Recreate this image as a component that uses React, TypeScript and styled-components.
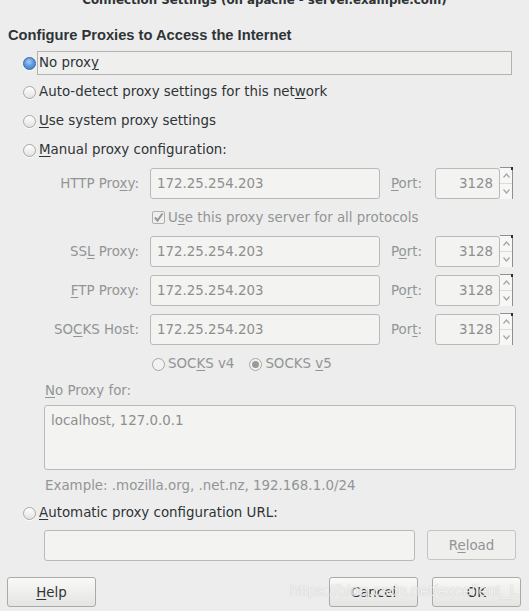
import React from 'react';
import styled, { createGlobalStyle } from 'styled-components';

const GlobalStyle = createGlobalStyle`
    html, body {
        margin: 0;
        padding: 0;
        background: #ededed;
    }
    body {
        font-family: "DejaVu Sans", "Noto Sans", sans-serif;
        font-size: 13.4px;
        color: #2e3436;
    }
`;

const Window = styled.div`
    position: relative;
    width: 529px;
    height: 611px;
    overflow: hidden;
    background: #ededed;
    display: flex;
    flex-direction: column;
`;

const TitleBar = styled.div`
    height: 12px;
    overflow: hidden;
    display: flex;
    justify-content: center;
    align-items: flex-end;
    font-size: 11.8px;
    font-weight: 700;
    line-height: 15px;
    color: #2e3436;
    span {
        display: block;
        margin-bottom: 4px;
    }
`;

const Content = styled.div`
    display: flex;
    flex-direction: column;
    padding: 0 17px 0 8px;
`;

const Heading = styled.div`
    font-family: "Liberation Sans", Arial, sans-serif;
    font-weight: 700;
    font-size: 14.7px;
    line-height: 16px;
    margin-top: 15px;
    margin-bottom: 8px;
`;

const Options = styled.div<{ gapTop?: number }>`
    display: flex;
    flex-direction: column;
    gap: 5px;
    padding-left: 15px;
    margin-top: ${p => p.gapTop || 0}px;
`;

const RadioRow = styled.label<{ disabled?: boolean }>`
    display: flex;
    align-items: center;
    height: 24px;
    gap: 1px;
    color: ${p => (p.disabled ? '#929595' : '#2e3436')};
`;

const RadioDot = styled.span<{ checked?: boolean; disabled?: boolean }>`
    position: relative;
    flex: none;
    width: 13px;
    height: 13px;
    box-sizing: border-box;
    border-radius: 50%;
    border: 1px solid ${p => (p.checked && !p.disabled ? '#3465a4' : '#a7a7a5')};
    background: ${p =>
        p.checked && !p.disabled
            ? 'radial-gradient(circle at 45% 35%, #a9cdf5 0%, #5f9be0 45%, #3b78c8 100%)'
            : p.disabled
            ? '#f2f2f1'
            : 'linear-gradient(#ffffff, #e2e2e0)'};
    box-shadow: ${p => (p.disabled ? 'none' : '0 1px 0 rgba(255,255,255,0.8)')};
    &::after {
        content: '';
        display: ${p => (p.checked && p.disabled ? 'block' : 'none')};
        position: absolute;
        left: 2px;
        top: 2px;
        width: 7px;
        height: 7px;
        border-radius: 50%;
        background: #9a9a99;
    }
`;

const OptionText = styled.span<{ focused?: boolean }>`
    display: block;
    height: 24px;
    line-height: 22px;
    box-sizing: border-box;
    padding: 0 1px;
    white-space: nowrap;
    flex: ${p => (p.focused ? 1 : 'none')};
    border: 1px solid ${p => (p.focused ? '#b2b2b0' : 'transparent')};
    background: ${p => (p.focused ? '#efefee' : 'transparent')};
`;

const U = styled.u`
    text-decoration: underline;
    text-underline-offset: 2px;
`;

const Manual = styled.div`
    display: flex;
    flex-direction: column;
    gap: 8px;
    padding-left: 36px;
    margin-top: 6px;
`;

const ProxyRow = styled.div`
    display: flex;
    align-items: center;
    height: 31px;
`;

const FieldLabel = styled.span<{ width: number }>`
    width: ${p => p.width}px;
    flex: none;
    color: #929595;
    white-space: nowrap;
`;

const RightLabel = styled(FieldLabel)`
    text-align: right;
    margin-right: 11px;
`;

const PortLabel = styled(FieldLabel)`
    margin-left: 11px;
`;

const TextBox = styled.div<{ width: number; align?: string }>`
    width: ${p => p.width}px;
    height: 31px;
    flex: none;
    box-sizing: border-box;
    display: flex;
    align-items: center;
    justify-content: ${p => (p.align === 'right' ? 'flex-end' : 'flex-start')};
    padding: 0 6px;
    border: 1px solid #b9b9b6;
    border-radius: 3px;
    background: #f3f3f2;
    color: #8e8e8e;
    white-space: nowrap;
`;

const Spinner = styled.div`
    position: relative;
    width: 13px;
    height: 32px;
    margin-top: -1px;
    flex: none;
    box-sizing: border-box;
    display: flex;
    flex-direction: column;
    background: #f7f7f6;
    border-top: 1px solid #8f8f8f;
    border-right: 1px solid #8f8f8f;
    &::before {
        content: '';
        position: absolute;
        right: -1px;
        top: -1px;
        width: 2px;
        height: 3px;
        background: #2e2e2e;
    }
`;

const SpinHalf = styled.div<{ top?: boolean }>`
    flex: 1;
    display: flex;
    align-items: center;
    justify-content: center;
    border-bottom: ${p => (p.top ? '1px solid #dcdcdb' : 'none')};
`;

const CheckRow = styled.label`
    display: flex;
    align-items: center;
    gap: 3px;
    height: 21px;
    padding-left: 108px;
    color: #929595;
`;

const CheckBox = styled.span`
    width: 13px;
    height: 13px;
    box-sizing: border-box;
    border: 1px solid #aeaeac;
    border-radius: 2px;
    background: #efefee;
    display: flex;
    align-items: center;
    justify-content: center;
`;

const SocksRow = styled.div`
    display: flex;
    align-items: center;
    gap: 13px;
    height: 22px;
    padding-left: 108px;
`;

const SubLabel = styled.div`
    color: #929595;
    height: 16px;
    line-height: 16px;
    padding-left: 1px;
`;

const NoProxyBox = styled.div`
    width: 472px;
    height: 65px;
    box-sizing: border-box;
    border: 1px solid #b9b9b6;
    border-radius: 3px;
    background: #f3f3f2;
    color: #8e8e8e;
    padding: 7px 6px;
    margin-top: -2px;
`;

const Hint = styled.div`
    color: #929595;
    height: 16px;
    line-height: 16px;
    padding-left: 1px;
`;

const UrlRow = styled.div`
    display: flex;
    gap: 12px;
    padding-left: 36px;
    margin-top: 5px;
`;

const Footer = styled.div`
    display: flex;
    align-items: center;
    padding: 0 8px 0 7px;
    margin-top: 16px;
    gap: 14px;
`;

const Button = styled.button<{ disabled?: boolean }>`
    width: 89px;
    height: 30px;
    box-sizing: border-box;
    border: 1px solid ${p => (p.disabled ? '#c4c4c1' : '#aaaaa7')};
    border-radius: 3px;
    background: ${p => (p.disabled ? '#efefee' : 'linear-gradient(#f9f9f8, #e4e4e2)')};
    color: ${p => (p.disabled ? '#929595' : '#2e3436')};
    font-family: inherit;
    font-size: 13.4px;
    padding: 0;
    flex: none;
`;

const Spacer = styled.div`
    flex: 1;
`;

const Watermark = styled.div`
    position: absolute;
    left: 290px;
    top: 582px;
    font-family: "Liberation Sans", Arial, sans-serif;
    font-size: 16px;
    color: rgba(255, 255, 255, 0.8);
    text-shadow: 0 0 1px rgba(110, 110, 110, 0.45);
    white-space: nowrap;
    pointer-events: none;
`;

const Chevron = ({ up }: { up?: boolean }) => (
    <svg width="7" height="5" viewBox="0 0 7 5">
        <path
            d={up ? 'M0.5 4.5 L3.5 1 L6.5 4.5' : 'M0.5 0.5 L3.5 4 L6.5 0.5'}
            fill="none"
            stroke="#a5a5a5"
            strokeWidth="1.2"
        />
    </svg>
);

const Check = () => (
    <svg width="11" height="11" viewBox="0 0 11 11">
        <path d="M2 5.5 L4.5 8.5 L9.5 1.5" fill="none" stroke="#979796" strokeWidth="2" />
    </svg>
);

interface ProxyDef {
    label: React.ReactNode;
    port: React.ReactNode;
}

const proxies: Array<ProxyDef> = [
    { label: <>HTTP Pro<U>x</U>y:</>, port: <><U>P</U>ort:</> },
    { label: <>SS<U>L</U> Proxy:</>, port: <>P<U>o</U>rt:</> },
    { label: <><U>F</U>TP Proxy:</>, port: <>Po<U>r</U>t:</> },
    { label: <>SO<U>C</U>KS Host:</>, port: <>Por<U>t</U>:</> },
];

const ProxyLine = ({ def }: { def: ProxyDef }) => (
    <ProxyRow>
        <RightLabel width={95}>{def.label}</RightLabel>
        <TextBox width={230}>172.25.254.203</TextBox>
        <PortLabel width={44}>{def.port}</PortLabel>
        <TextBox width={65} align="right">3128</TextBox>
        <Spinner>
            <SpinHalf top><Chevron up /></SpinHalf>
            <SpinHalf><Chevron /></SpinHalf>
        </Spinner>
    </ProxyRow>
);

export default function App() {
    return (
        <>
            <GlobalStyle />
            <Window>
                <TitleBar>
                    <span>Connection Settings (on apache - server.example.com)</span>
                </TitleBar>
                <Content>
                    <Heading>Configure Proxies to Access the Internet</Heading>
                    <Options>
                        <RadioRow>
                            <RadioDot checked />
                            <OptionText focused>No prox<U>y</U></OptionText>
                        </RadioRow>
                        <RadioRow>
                            <RadioDot />
                            <OptionText>Auto-detect proxy settings for this net<U>w</U>ork</OptionText>
                        </RadioRow>
                        <RadioRow>
                            <RadioDot />
                            <OptionText><U>U</U>se system proxy settings</OptionText>
                        </RadioRow>
                        <RadioRow>
                            <RadioDot />
                            <OptionText><U>M</U>anual proxy configuration:</OptionText>
                        </RadioRow>
                    </Options>
                    <Manual>
                        <ProxyLine def={proxies[0]} />
                        <CheckRow>
                            <CheckBox><Check /></CheckBox>
                            <span>U<U>s</U>e this proxy server for all protocols</span>
                        </CheckRow>
                        <ProxyLine def={proxies[1]} />
                        <ProxyLine def={proxies[2]} />
                        <ProxyLine def={proxies[3]} />
                        <SocksRow>
                            <RadioRow disabled>
                                <RadioDot disabled />
                                <OptionText>SOC<U>K</U>S v4</OptionText>
                            </RadioRow>
                            <RadioRow disabled>
                                <RadioDot checked disabled />
                                <OptionText>SOCKS <U>v</U>5</OptionText>
                            </RadioRow>
                        </SocksRow>
                        <SubLabel><U>N</U>o Proxy for:</SubLabel>
                        <NoProxyBox>localhost, 127.0.0.1</NoProxyBox>
                        <Hint>Example: .mozilla.org, .net.nz, 192.168.1.0/24</Hint>
                    </Manual>
                    <Options gapTop={7}>
                        <RadioRow>
                            <RadioDot />
                            <OptionText><U>A</U>utomatic proxy configuration URL:</OptionText>
                        </RadioRow>
                    </Options>
                    <UrlRow>
                        <TextBox width={371} />
                        <Button disabled>R<U>e</U>load</Button>
                    </UrlRow>
                </Content>
                <Footer>
                    <Button><U>H</U>elp</Button>
                    <Spacer />
                    <Button>Cancel</Button>
                    <Button>OK</Button>
                </Footer>
                <Watermark>https://blog.csdn.net/excellent_L</Watermark>
            </Window>
        </>
    );
}
